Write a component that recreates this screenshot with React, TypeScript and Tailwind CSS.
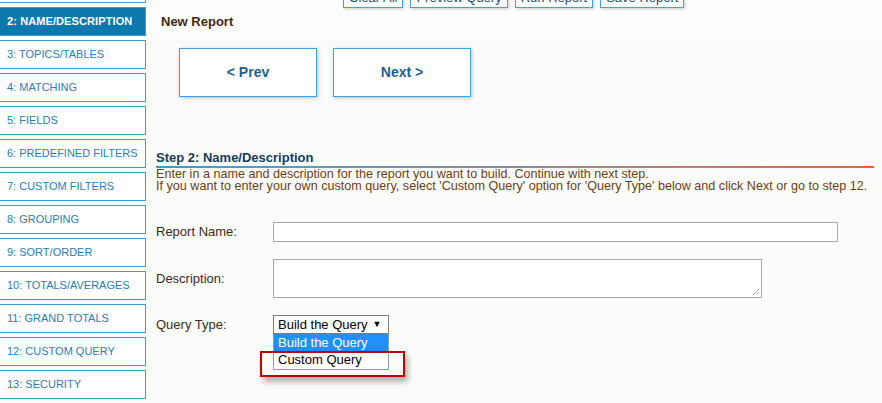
import React from 'react';

const steps = [
    '1: REPORT TYPE',
    '2: NAME/DESCRIPTION',
    '3: TOPICS/TABLES',
    '4: MATCHING',
    '5: FIELDS',
    '6: PREDEFINED FILTERS',
    '7: CUSTOM FILTERS',
    '8: GROUPING',
    '9: SORT/ORDER',
    '10: TOTALS/AVERAGES',
    '11: GRAND TOTALS',
    '12: CUSTOM QUERY',
    '13: SECURITY',
];

const topButtons = ['Clear All', 'Preview Query', 'Run Report', 'Save Report'];

export default function App() {
    return (
        <div className="w-[882px] h-[403px] overflow-hidden bg-[#fcfcfa] flex font-['Liberation_Sans',Arial,sans-serif]">
            {/* Step nav */}
            <div className="w-[147px] shrink-0 flex flex-col gap-[4px] mt-[-26px]">
                {steps.map((s, i) => (
                    <div
                        key={s}
                        className={
                            i === 1
                                ? 'h-[29px] w-[146px] flex items-center pl-[7px] border border-l-0 border-[#2d9fd9] bg-[#0b78ae] text-white text-[11px] font-bold tracking-[0.1px]'
                                : 'h-[29px] w-[146px] flex items-center pl-[7px] border border-l-0 border-[#2d9fd9] bg-white text-[#2e7bb5] text-[11px]'
                        }
                    >
                        {s}
                    </div>
                ))}
            </div>

            {/* Main */}
            <div className="flex-1 flex flex-col">
                <div className="h-[41px] shrink-0 bg-[#fdfdfb] shadow-[0_1px_2px_rgba(0,0,0,0.04)] flex flex-col">
                    {/* toolbar, scrolled mostly out of view */}
                    <div className="flex gap-[7px] pl-[196px] mt-[-12px]">
                        {topButtons.map((b) => (
                            <div
                                key={b}
                                className="h-[20px] px-[5px] flex items-center border border-[#3aa6dd] bg-white text-[13px] text-[#1c4f74] shadow-[1px_1px_3px_rgba(0,0,0,0.2)]"
                            >
                                {b}
                            </div>
                        ))}
                    </div>
                    <div className="pl-[14px] mt-[4px] text-[13px] font-bold text-[#3d2a12]">New Report</div>
                </div>

                <div className="flex gap-[16px] pl-[32px] mt-[7px]">
                    <button className="w-[138px] h-[49px] border border-[#3aa6dd] bg-white text-[14px] font-bold text-[#1c5f8c] shadow-[1px_1px_4px_rgba(0,0,0,0.25)]">
                        &lt; Prev
                    </button>
                    <button className="w-[138px] h-[49px] border border-[#3aa6dd] bg-white text-[14px] font-bold text-[#1c5f8c] shadow-[1px_1px_4px_rgba(0,0,0,0.25)]">
                        Next &gt;
                    </button>
                </div>

                <div className="pl-[9px] pr-[8px] mt-[53px]">
                    <div className="text-[13px] font-bold text-[#163a5c] leading-[16px]">Step 2: Name/Description</div>
                    <div className="h-[2px] bg-gradient-to-r from-[#2a9fd8] via-[#8a8a9a] to-[#e8613a]" />
                    <div className="text-[12.6px] leading-[12px] text-[#6a3e12] whitespace-nowrap">
                        <div>Enter in a name and description for the report you want to build. Continue with next step.</div>
                        <div>If you want to enter your own custom query, select 'Custom Query' option for 'Query Type' below and click Next or go to step 12.</div>
                    </div>

                    <div className="mt-[30px] flex items-center">
                        <div className="w-[117px] text-[13px] text-[#3a2a1a]">Report Name:</div>
                        <div className="w-[565px] h-[20px] border border-[#a9a9a9] bg-white" />
                    </div>

                    <div className="mt-[17px] flex items-center">
                        <div className="w-[117px] text-[13px] text-[#3a2a1a]">Description:</div>
                        <div className="relative w-[489px] h-[39px] border border-[#a9a9a9] bg-white">
                            <svg className="absolute right-[1px] bottom-[1px]" width="9" height="9" viewBox="0 0 9 9">
                                <path d="M8 2L2 8M8 5L5 8" stroke="#777" strokeWidth="1" strokeDasharray="1 1" />
                            </svg>
                        </div>
                    </div>

                    <div className="mt-[17px] flex items-start">
                        <div className="w-[117px] text-[13px] text-[#3a2a1a]">Query Type:</div>
                        <div className="relative">
                            <div className="w-[116px] h-[19px] border border-[#7a7a7a] bg-white flex items-center pl-[4px] text-[13px] text-black">
                                Build the Query
                                <span className="ml-[5px] text-[9px]">▼</span>
                            </div>
                            <div className="w-[116px] border border-t-0 border-[#7f9db9] bg-white text-[13px]">
                                <div className="h-[17px] bg-[#1e90ff] text-white pl-[4px] leading-[17px]">Build the Query</div>
                                <div className="h-[18px] text-black pl-[4px] leading-[18px]">Custom Query</div>
                            </div>
                            {/* highlight box */}
                            <div className="absolute left-[-13px] top-[36px] w-[145px] h-[26px] border-2 border-[#c00000] shadow-[3px_5px_6px_rgba(0,0,0,0.3)]" />
                        </div>
                    </div>
                </div>
            </div>
        </div>
    );
}
